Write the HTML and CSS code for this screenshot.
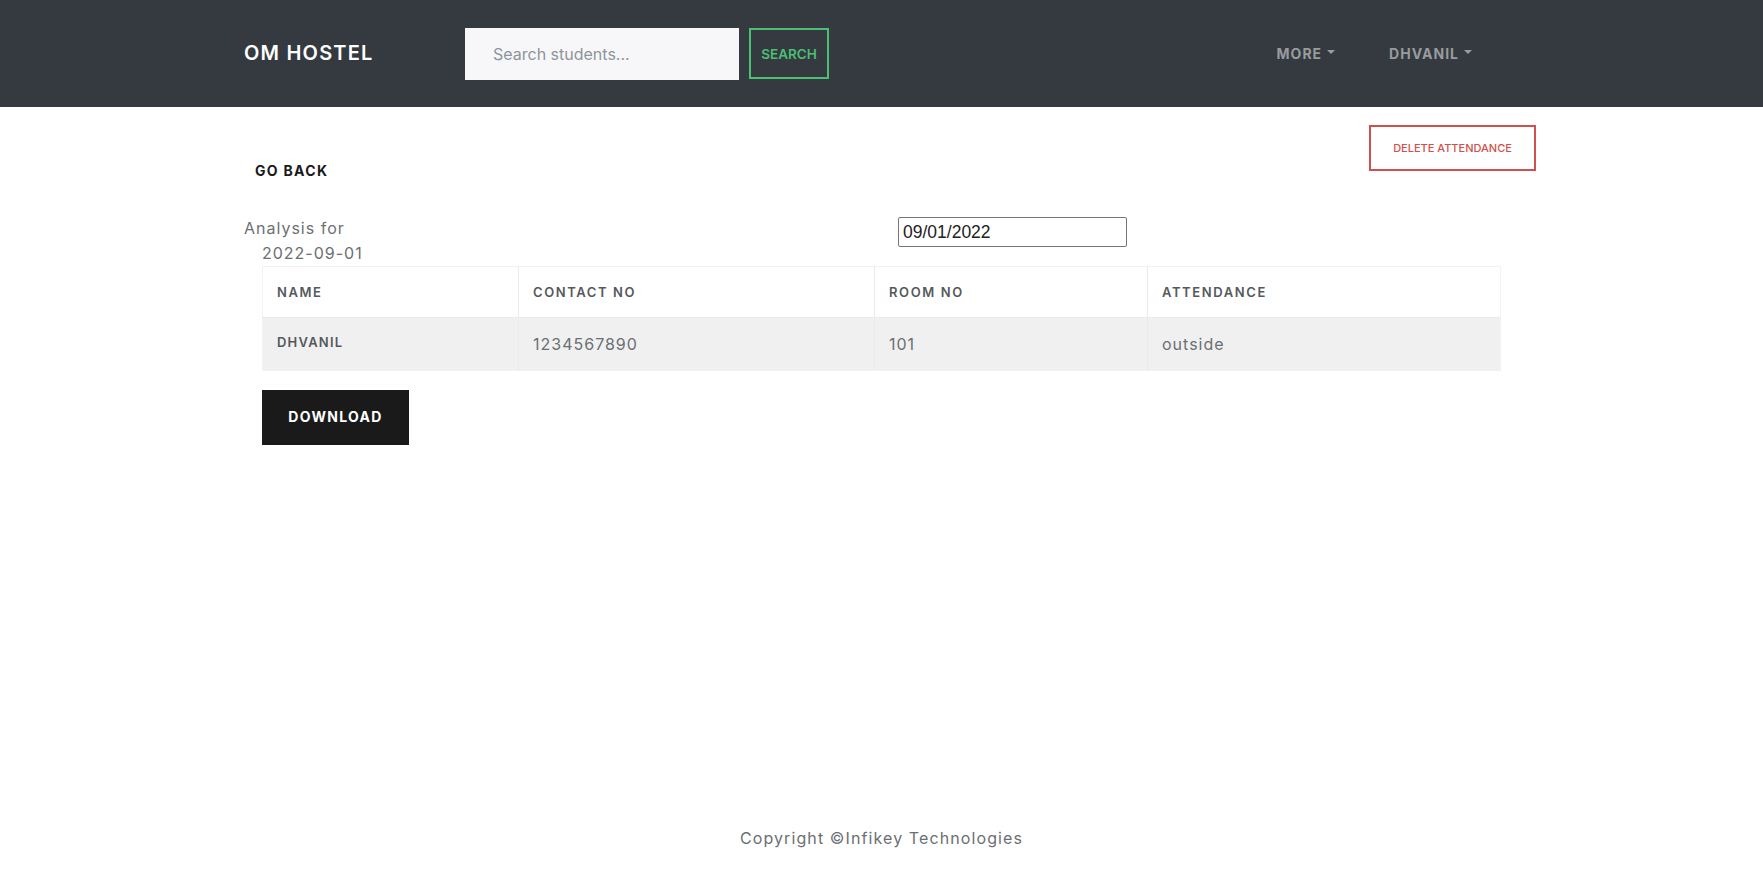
FILE: index.html
```html
<!DOCTYPE html>
<html lang="en">
<head>
<meta charset="utf-8">
<title>OM Hostel</title>
<link rel="stylesheet" href="styles.css">
</head>
<body>
<header class="navbar">
  <div class="nav-inner">
    <a class="brand" href="#">OM HOSTEL</a>
    <form class="search">
      <input class="search-input" type="text" placeholder="Search students...">
      <button class="search-btn" type="button">SEARCH</button>
    </form>
    <nav class="nav-links">
      <a class="nav-link" href="#">MORE</a>
      <a class="nav-link" href="#">DHVANIL</a>
    </nav>
  </div>
</header>

<main class="main">
  <div class="top-row">
    <a class="go-back" href="#">GO BACK</a>
    <button class="delete-btn" type="button">DELETE ATTENDANCE</button>
  </div>

  <div class="analysis-row">
    <div class="analysis-title">
      <div>Analysis for</div>
      <div class="analysis-date">2022-09-01</div>
    </div>
    <input class="date-input" type="text" value="09/01/2022">
  </div>

  <div class="table-wrap">
    <table class="table">
      <thead>
        <tr>
          <th class="c1">NAME</th>
          <th class="c2">CONTACT NO</th>
          <th class="c3">ROOM NO</th>
          <th class="c4">ATTENDANCE</th>
        </tr>
      </thead>
      <tbody>
        <tr class="active">
          <th>DHVANIL</th>
          <td>1234567890</td>
          <td>101</td>
          <td>outside</td>
        </tr>
      </tbody>
    </table>
    <button class="download-btn" type="button">DOWNLOAD</button>
  </div>
</main>

<footer class="footer">Copyright ©Infikey Technologies</footer>
</body>
</html>
```

FILE: styles.css
```css
* { box-sizing: border-box; }

html, body { margin: 0; padding: 0; }

body {
  font-family: "Inter", "Noto Sans", sans-serif;
  color: #55595c;
  background: #fff;
  min-height: 100vh;
  display: flex;
  flex-direction: column;
}

a { text-decoration: none; }

/* Navbar */
.navbar {
  background: #343a40;
  height: 107px;
}

.nav-inner {
  width: 1275px;
  margin: 0 auto;
  height: 100%;
  display: flex;
  align-items: center;
  padding-right: 20px;
}

.brand {
  width: 221px;
  color: #fff;
  font-size: 20px;
  font-weight: 600;
  letter-spacing: 1.2px;
  padding-bottom: 1px;
}

.search {
  display: flex;
  align-items: center;
  gap: 10px;
}

.search-input {
  width: 274px;
  height: 52px;
  border: none;
  background: #f7f7f9;
  padding: 0 20px 0 28px;
  font-family: "Inter", sans-serif;
  font-size: 16px;
  color: #55595c;
  outline: none;
}

.search-input::placeholder { color: #8e9499; }

.search-btn {
  width: 80px;
  height: 51px;
  background: transparent;
  border: 2px solid #4bbf73;
  color: #4bbf73;
  font-family: "Inter", sans-serif;
  font-size: 13.5px;
  font-weight: 600;
  padding: 0;
}

.nav-links {
  margin-left: auto;
  display: flex;
}

.nav-link {
  color: #999b9e;
  font-size: 14px;
  font-weight: 700;
  letter-spacing: 1px;
  padding: 0 27px;
  display: flex;
  align-items: center;
  margin-top: -1px;
}

.nav-link::after {
  content: "";
  display: inline-block;
  margin-left: 5px;
  margin-top: -2px;
  border-top: 4px solid #999b9e;
  border-left: 4px solid transparent;
  border-right: 4px solid transparent;
}

/* Main */
.main {
  width: 1275px;
  margin: 0 auto;
}

.top-row {
  display: flex;
  justify-content: space-between;
  align-items: flex-start;
  margin-top: 18px;
}

.go-back {
  margin-top: 36px;
  margin-left: 11px;
  line-height: 20px;
  font-size: 14px;
  font-weight: 700;
  letter-spacing: 1.3px;
  color: #1a1a1a;
}

.delete-btn {
  width: 167px;
  height: 46px;
  margin-right: -17px;
  background: #fff;
  border: 2px solid #d0504c;
  color: #d0504c;
  font-family: "Inter", sans-serif;
  font-size: 11px;
  font-weight: 500;
  padding: 0;
}

.analysis-row {
  display: grid;
  grid-template-columns: 654px auto;
  align-items: start;
  margin-top: 34px;
}

.analysis-title {
  font-size: 16px;
  line-height: 25px;
  letter-spacing: 1px;
  color: #6b6f72;
  padding-top: 1px;
}

.analysis-date {
  padding-left: 18px;
}

.date-input {
  justify-self: start;
  margin-top: 2px;
  width: 229px;
  height: 30px;
  border: 1px solid #767676;
  border-radius: 2px;
  padding: 0 4px;
  font-family: "Liberation Sans", Arial, sans-serif;
  font-size: 17.5px;
  color: #222;
}

/* Table */
.table-wrap {
  padding: 0 18px;
}

.table {
  width: 100%;
  border-collapse: collapse;
  border: 1px solid #f2f2f2;
}

.table th, .table td {
  text-align: left;
  padding: 0 0 0 14px;
  border-left: 1px solid #ebebeb;
}

.table th:first-child { border-left: none; }

.table thead th {
  height: 51px;
  font-size: 13px;
  font-weight: 600;
  letter-spacing: 1.6px;
  color: #55595c;
  border-bottom: 1px solid #ebebeb;
}

.c1 { width: 256px; }
.c2 { width: 356px; }
.c3 { width: 273px; }

.table tbody tr.active { background: #f0f0f0; }

.table tbody th {
  height: 53px;
  font-size: 13px;
  font-weight: 600;
  letter-spacing: 1.2px;
  color: #55595c;
  padding-bottom: 4px;
}

.table tbody td {
  font-size: 16px;
  letter-spacing: 1px;
  color: #6b6f72;
}

.download-btn {
  margin-top: 19px;
  width: 147px;
  height: 55px;
  background: #1a1a1a;
  color: #fff;
  border: none;
  font-family: "Inter", sans-serif;
  font-size: 14px;
  font-weight: 700;
  letter-spacing: 1.3px;
  padding: 0 0 3px;
}

/* Footer */
.footer {
  margin-top: auto;
  text-align: center;
  font-size: 16px;
  line-height: 24px;
  letter-spacing: 1.1px;
  color: #6b6f72;
  padding-bottom: 25px;
}
```
